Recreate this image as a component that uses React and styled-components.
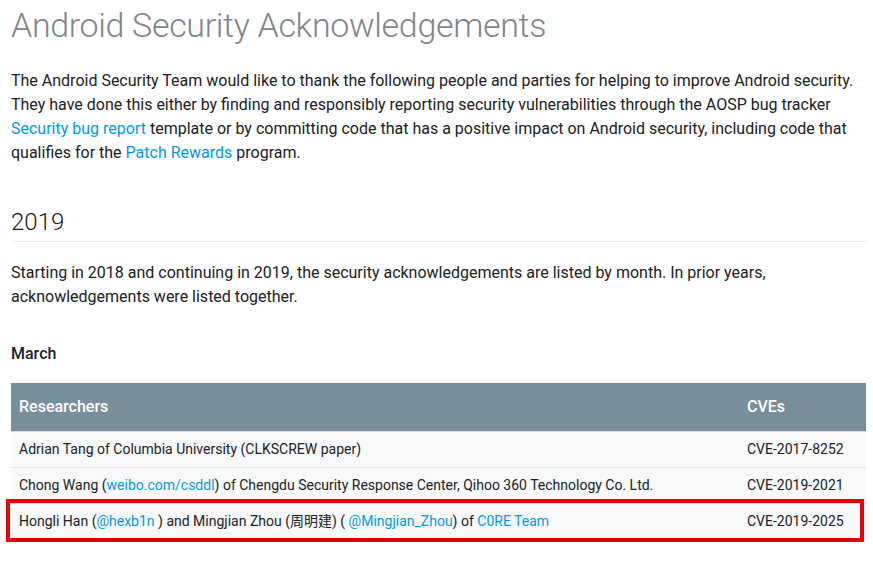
import React from "react";
import styled, { createGlobalStyle } from "styled-components";

const GlobalStyle = createGlobalStyle`
  body {
    margin: 0;
    background: #ffffff;
    font-family: Roboto, "Noto Sans CJK SC", sans-serif;
    color: #202124;
  }
`;

const Page = styled.div`
  padding: 5px 7px 40px 11px;
`;

const Title = styled.h1`
  margin: 0;
  font-size: 34px;
  line-height: 40px;
  font-weight: 300;
  letter-spacing: -0.01em;
  color: #80868b;
`;

const Text = styled.p`
  margin: ${(p) => p.$top || 0}px 0 0;
  font-size: 16px;
  line-height: 24px;
`;

const Link = styled.a`
  color: #039be5;
  text-decoration: none;
`;

const Year = styled.h2`
  margin: 41px 0 0;
  padding-bottom: 3px;
  border-bottom: 1px solid #e8eaed;
  font-size: 24px;
  line-height: 32px;
  font-weight: 300;
`;

const Month = styled.h4`
  margin: 33px 0 0;
  font-size: 16px;
  line-height: 24px;
  font-weight: 500;
`;

const Table = styled.table`
  margin-top: 17px;
  width: 100%;
  border-collapse: collapse;
  table-layout: fixed;
  font-size: 14px;
  line-height: 20px;
`;

const Head = styled.th`
  background: #78909c;
  color: #ffffff;
  font-size: 16px;
  line-height: 24px;
  font-weight: 500;
  text-align: left;
  padding: 12px 8px;
`;

const Row = styled.tr`
  position: relative;
  background: #f8f9fa;
  border-top: 1px solid #e0e0e0;
`;

const Cell = styled.td`
  padding: 7px 8px 8px;
  white-space: nowrap;
`;

const Highlight = styled.span`
  position: absolute;
  top: -6px;
  bottom: -3px;
  left: -5px;
  right: 2px;
  border: 4px solid #e4050c;
  pointer-events: none;
`;

const rows = [
  {
    who: <>Adrian Tang of Columbia University (CLKSCREW paper)</>,
    cve: "CVE-2017-8252",
  },
  {
    who: (
      <>
        Chong Wang (<Link href="#">weibo.com/csddl</Link>) of Chengdu Security
        Response Center, Qihoo 360 Technology Co. Ltd.
      </>
    ),
    cve: "CVE-2019-2021",
  },
  {
    who: (
      <>
        Hongli Han (<Link href="#">@hexb1n </Link>) and Mingjian Zhou (周明建) ({" "}
        <Link href="#">@Mingjian_Zhou</Link>) of <Link href="#">C0RE Team</Link>
      </>
    ),
    cve: "CVE-2019-2025",
    marked: true,
  },
];

export default function App() {
  return (
    <>
      <GlobalStyle />
      <Page>
        <Title>Android Security Acknowledgements</Title>
        <Text $top={24}>
          The Android Security Team would like to thank the following people
          and parties for helping to improve Android security. They have done
          this either by finding and responsibly reporting security
          vulnerabilities through the AOSP bug tracker{" "}
          <Link href="#">Security bug report</Link> template or by committing
          code that has a positive impact on Android security, including code
          that qualifies for the <Link href="#">Patch Rewards</Link> program.
        </Text>
        <Year>2019</Year>
        <Text $top={19}>
          Starting in 2018 and continuing in 2019, the security acknowledgements
          are listed by month. In prior years, acknowledgements were listed
          together.
        </Text>
        <Month>March</Month>
        <Table>
          <colgroup>
            <col />
            <col style={{ width: 127 }} />
          </colgroup>
          <thead>
            <tr>
              <Head>Researchers</Head>
              <Head>CVEs</Head>
            </tr>
          </thead>
          <tbody>
            {rows.map((r) => (
              <Row key={r.cve}>
                <Cell>{r.who}</Cell>
                <Cell>
                  {r.cve}
                  {r.marked && <Highlight />}
                </Cell>
              </Row>
            ))}
          </tbody>
        </Table>
      </Page>
    </>
  );
}
